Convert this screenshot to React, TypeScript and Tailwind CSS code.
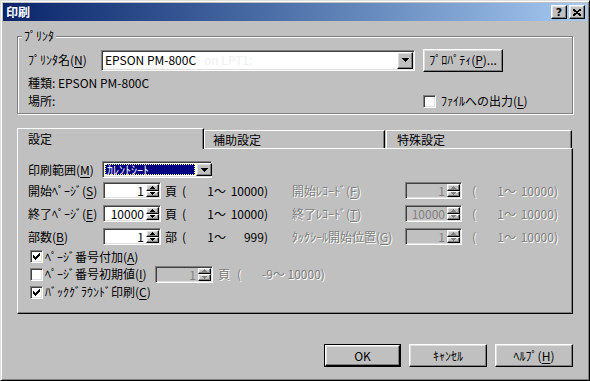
import React from 'react';

const raised =
  'border border-t-white border-l-white border-r-black border-b-black shadow-[inset_-1px_-1px_0_#808080,inset_1px_1px_0_#dfdfdf]';
const sunken =
  'border border-t-[#808080] border-l-[#808080] border-r-white border-b-white shadow-[inset_1px_1px_0_#404040,inset_-1px_-1px_0_#dfdfdf]';
const gray = 'text-[#808080] [text-shadow:1px_1px_0_white]';

const DownArrow: React.FC = () => (
  <svg width="7" height="4" shapeRendering="crispEdges">
    <path d="M0 0h7v1h-1v1h-1v1h-1v1h-1v-1h-1v-1h-1v-1h-1z" fill="#000" />
  </svg>
);

const DropButton: React.FC = () => (
  <div className={`w-[16px] h-full bg-[#c0c0c0] flex items-center justify-center ${raised}`}>
    <DownArrow />
  </div>
);

const SpinHalf: React.FC<{ up?: boolean; disabled?: boolean }> = ({ up, disabled }) => (
  <div className={`flex-1 bg-[#c0c0c0] flex items-center justify-center ${raised}`}>
    <svg width="5" height="3" shapeRendering="crispEdges" className={up ? 'rotate-180' : ''}>
      <path d="M0 0h5v1h-1v1h-1v1h-1v-1h-1v-1h-1z" fill={disabled ? '#808080' : '#000'} />
    </svg>
  </div>
);

const Spin: React.FC<{ value: string; className: string; disabled?: boolean }> = ({
  value,
  className,
  disabled,
}) => (
  <div
    className={`h-[17px] p-[1px] flex ${sunken} ${disabled ? 'bg-[#c0c0c0] text-[#808080]' : 'bg-white text-black'} ${className}`}
  >
    <div className="flex-1 text-right pr-[2px] leading-[13px]">{value}</div>
    <div className="w-[13px] flex flex-col">
      <SpinHalf up disabled={disabled} />
      <SpinHalf disabled={disabled} />
    </div>
  </div>
);

const CheckBox: React.FC<{ checked?: boolean }> = ({ checked }) => (
  <div className={`w-[13px] h-[13px] shrink-0 bg-white flex items-center justify-center ${sunken}`}>
    {checked && (
      <svg width="7" height="7" shapeRendering="crispEdges">
        <path d="M0 2L2 4L7 -1L7 2L2 7L0 5Z" fill="#000" />
      </svg>
    )}
  </div>
);

const Button: React.FC<{ label: React.ReactNode; className: string; isDefault?: boolean }> = ({
  label,
  className,
  isDefault,
}) => (
  <div className={`h-[23px] ${isDefault ? 'border border-black' : ''} ${className}`}>
    <div className={`w-full h-full bg-[#c0c0c0] flex items-center justify-center ${raised}`}>{label}</div>
  </div>
);

const U: React.FC<{ c: string }> = ({ c }) => <span className="underline underline-offset-2">{c}</span>;

// "(   1～ 10000)" column, fixed widths so the numbers line up
const Range: React.FC<{ to: string; className?: string }> = ({ to, className = '' }) => (
  <div className={`flex shrink-0 ${className}`}>
    <span className="w-[25px]">(</span>
    <span className="w-[7px] text-right">1</span>
    <span className="w-[14px]">～</span>
    <span className="w-[40px] text-right">{to}</span>
  </div>
);

const rows = [
  { label: '開始ﾍﾟｰｼﾞ', key: 'S', value: '1', unit: '頁', to: '10000)', rl: '開始ﾚｺｰﾄﾞ', rk: 'F', rv: '1', mt: 'mt-[4px]' },
  { label: '終了ﾍﾟｰｼﾞ', key: 'E', value: '10000', unit: '頁', to: '10000)', rl: '終了ﾚｺｰﾄﾞ', rk: 'T', rv: '10000', mt: 'mt-[6px]' },
  { label: '部数', key: 'B', value: '1', unit: '部', to: '999)', rl: 'ﾀｯｸｼｰﾙ開始位置', rk: 'G', rv: '1', mt: 'mt-[6px]' },
];

export default function App() {
  return (
    <div className="w-[590px] h-[381px] bg-[#c0c0c0] text-[12px] leading-[14px] text-black font-['Noto_Sans_CJK_JP','Liberation_Sans',sans-serif]">
      <div className="w-full h-full border border-t-[#dfdfdf] border-l-[#dfdfdf] border-r-black border-b-black shadow-[inset_1px_1px_0_white,inset_-1px_-1px_0_#808080] p-[2px] flex flex-col">
        {/* Title bar */}
        <div className="h-[18px] shrink-0 bg-gradient-to-r from-[#0a246a] to-[#a6caf0] flex items-center pl-[3px] pr-[2px]">
          <span className="text-white font-bold text-[12px]">印刷</span>
          <div className="ml-auto flex gap-[2px]">
            <div className={`w-[16px] h-[14px] bg-[#c0c0c0] flex items-center justify-center ${raised}`}>
              <span className="font-bold text-[11px] leading-[11px] font-['DejaVu_Sans',sans-serif]">?</span>
            </div>
            <div className={`w-[16px] h-[14px] bg-[#c0c0c0] flex items-center justify-center ${raised}`}>
              <svg width="8" height="7" shapeRendering="crispEdges">
                <path d="M0 0L8 7M8 0L0 7" stroke="#000" strokeWidth="1.8" />
              </svg>
            </div>
          </div>
        </div>

        {/* Printer group */}
        <div className="relative ml-[14px] mt-[15px] w-[556px] h-[78px] shrink-0 border border-[#808080] shadow-[1px_1px_0_white,inset_1px_1px_0_white]">
          <span className="absolute left-[4px] -top-[8px] px-[2px] bg-[#c0c0c0]">ﾌﾟﾘﾝﾀ</span>
          <div className="flex items-center h-[22px] mt-[12px] pl-[10px]">
            <span className="w-[73px]">
              ﾌﾟﾘﾝﾀ名(<U c="N" />)
            </span>
            <div className={`w-[314px] h-[21px] p-[1px] bg-white flex ${sunken}`}>
              <div className="flex-1 flex items-center pl-[2px]">
                EPSON PM-800C<span className="ml-[8px] text-[#f0f0f0]">on LPT1:</span>
              </div>
              <DropButton />
            </div>
            <Button className="w-[80px] h-[22px] ml-[8px]" label={<span>ﾌﾟﾛﾊﾟﾃｨ(<U c="P" />)...</span>} />
          </div>
          <div className="mt-[5px] pl-[10px] h-[14px]">種類: EPSON PM-800C</div>
          <div className="mt-[4px] pl-[10px] h-[14px] flex items-center">
            <span className="w-[395px]">場所:</span>
            <CheckBox />
            <span className="ml-[5px]">
              ﾌｧｲﾙへの出力(<U c="L" />)
            </span>
          </div>
        </div>

        {/* Tabs */}
        <div className="ml-[14px] mt-[14px] h-[20px] shrink-0 flex items-end">
          <div className="relative z-10 -mb-px w-[187px] h-[21px] bg-[#c0c0c0] border-l border-t border-white border-r border-r-black shadow-[inset_-1px_0_0_#808080] pl-[10px] pt-[3px]">
            設定
          </div>
          <div className="w-[181px] h-[18px] border-l border-t border-white border-r border-r-black shadow-[inset_-1px_0_0_#808080] pl-[8px] pt-[2px]">
            補助設定
          </div>
          <div className="ml-[1px] w-[186px] h-[18px] border-l border-t border-white border-r border-r-black shadow-[inset_-1px_0_0_#808080] pl-[10px] pt-[2px]">
            特殊設定
          </div>
        </div>

        {/* Tab panel */}
        <div className="ml-[14px] w-[556px] h-[166px] shrink-0 border border-t-white border-l-white border-r-black border-b-black shadow-[inset_-1px_-1px_0_#808080] flex flex-col">
          <div className="flex items-center h-[17px] mt-[12px] pl-[10px]">
            <span className="w-[74px]">
              印刷範囲(<U c="M" />)
            </span>
            <div className={`w-[110px] h-[17px] p-[1px] bg-white flex ${sunken}`}>
              <div className="flex-1 p-[1px]">
                <div className="h-full bg-[#000080] text-white outline-1 outline-dotted outline-[#ffff80] -outline-offset-1 pl-[2px] leading-[11px]">
                  ｶﾚﾝﾄｼｰﾄ
                </div>
              </div>
              <div className="w-[14px]">
                <DropButton />
              </div>
            </div>
          </div>

          {rows.map((r) => (
            <div key={r.key} className={`flex items-center h-[17px] pl-[10px] ${r.mt}`}>
              <span className="w-[75px] shrink-0">
                {r.label}(<U c={r.key} />)
              </span>
              <Spin value={r.value} className="w-[58px] shrink-0" />
              <span className="w-[17px] ml-[4px] shrink-0">{r.unit}</span>
              <Range to={r.to} />
              <span className={`ml-[24px] w-[113px] shrink-0 ${gray}`}>
                {r.rl}(<U c={r.rk} />)
              </span>
              <Spin value={r.rv} disabled className="w-[57px] shrink-0" />
              <Range to="10000)" className={`ml-[10px] ${gray}`} />
            </div>
          ))}

          <div className="mt-[3px] pl-[12px] flex items-center h-[17px]">
            <CheckBox checked />
            <span className="ml-[2px]">
              ﾍﾟｰｼﾞ番号付加(<U c="A" />)
            </span>
          </div>
          <div className="pl-[12px] flex items-center h-[18px]">
            <CheckBox />
            <span className="ml-[2px] w-[110px]">
              ﾍﾟｰｼﾞ番号初期値(<U c="I" />)
            </span>
            <Spin value="1" disabled className="w-[58px]" />
            <span className={`ml-[5px] w-[19px] ${gray}`}>頁</span>
            <span className={`w-[25px] ${gray}`}>(</span>
            <span className={gray}>-9～ 10000)</span>
          </div>
          <div className="pl-[12px] flex items-center h-[18px]">
            <CheckBox checked />
            <span className="ml-[2px]">
              ﾊﾞｯｸｸﾞﾗｳﾝﾄﾞ印刷(<U c="C" />)
            </span>
          </div>
        </div>

        {/* Buttons */}
        <div className="mt-[30px] pr-[14px] flex justify-end gap-[8px]">
          <Button isDefault className="w-[77px]" label="OK" />
          <Button className="w-[78px]" label="ｷｬﾝｾﾙ" />
          <Button className="w-[78px]" label={<span>ﾍﾙﾌﾟ(<U c="H" />)</span>} />
        </div>
      </div>
    </div>
  );
}
